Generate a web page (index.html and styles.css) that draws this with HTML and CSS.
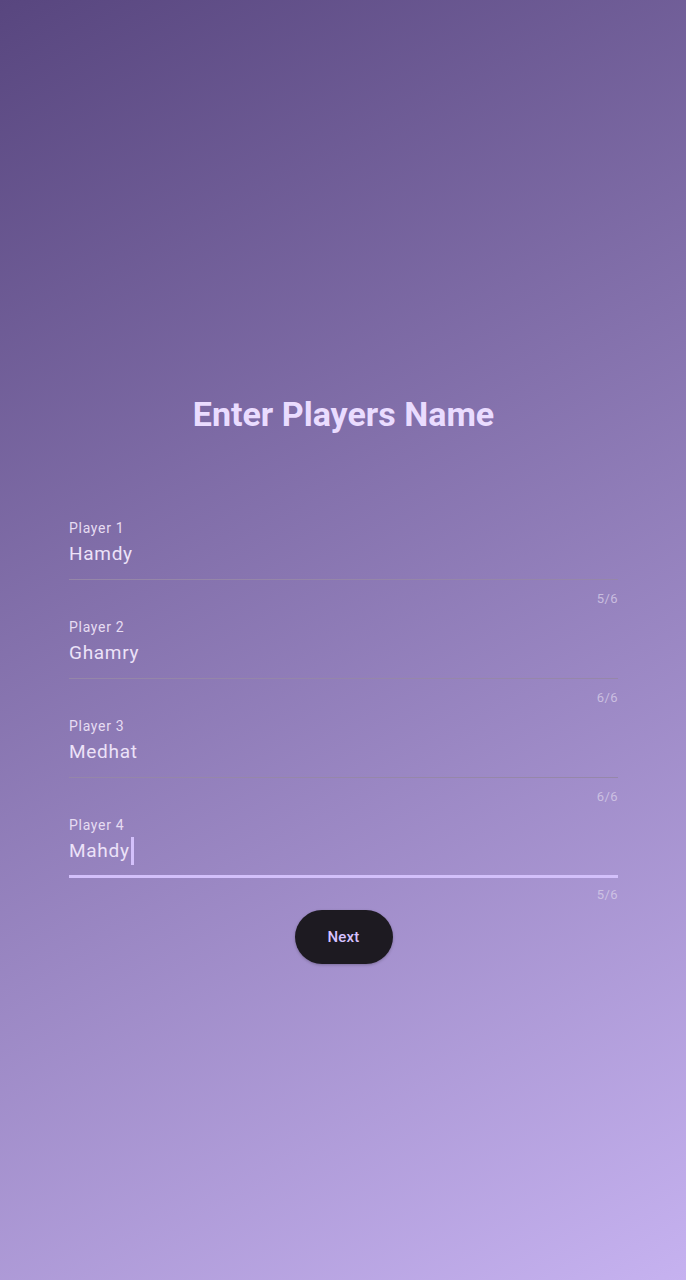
FILE: index.html
```html
<!DOCTYPE html>
<html>
<head>
<meta charset="utf-8">
<link rel="stylesheet" href="styles.css">
</head>
<body>
<div class="screen">
  <h1 class="title">Enter Players Name</h1>
  <div class="fields">
    <div class="field">
      <div class="label">Player 1</div>
      <div class="value">Hamdy</div>
      <div class="line"></div>
      <div class="counter">5/6</div>
    </div>
    <div class="field">
      <div class="label">Player 2</div>
      <div class="value">Ghamry</div>
      <div class="line"></div>
      <div class="counter">6/6</div>
    </div>
    <div class="field">
      <div class="label">Player 3</div>
      <div class="value">Medhat</div>
      <div class="line"></div>
      <div class="counter">6/6</div>
    </div>
    <div class="field focused">
      <div class="label">Player 4</div>
      <div class="value">Mahdy<span class="caret"></span></div>
      <div class="line"></div>
      <div class="counter">5/6</div>
    </div>
  </div>
  <div class="actions">
    <button class="next">Next</button>
  </div>
</div>
</body>
</html>
```
FILE: styles.css
```css
html, body {
  margin: 0;
  padding: 0;
}
body {
  width: 686px;
  height: 1280px;
  background: linear-gradient(152deg, #58467f 0%, #c6b2f0 100%);
  font-family: Roboto, "Noto Sans", sans-serif;
  overflow: hidden;
}
.screen {
  display: flex;
  flex-direction: column;
  padding: 394px 68px 0 69px;
}
.title {
  margin: 0;
  font-size: 34px;
  line-height: 40px;
  font-weight: 700;
  color: #eadcff;
  text-align: center;
}
.fields {
  margin-top: 84px;
  display: flex;
  flex-direction: column;
}
.field {
  display: flex;
  flex-direction: column;
  margin-bottom: 10px;
}
.label {
  font-size: 14px;
  line-height: 20px;
  color: #e6dcf2;
  letter-spacing: 0.7px;
}
.value {
  margin-top: 2px;
  font-size: 19px;
  line-height: 28px;
  color: #ece2f8;
  letter-spacing: 0.7px;
  display: flex;
  align-items: center;
  padding-bottom: 11px;
}
.line {
  height: 1px;
  background: rgba(150, 135, 168, 0.95);
}
.counter {
  margin-top: 11px;
  font-size: 13px;
  line-height: 16px;
  text-align: right;
  color: rgba(215, 205, 232, 0.8);
  letter-spacing: 0.4px;
}
.focused .line {
  height: 3px;
  margin-top: -1px;
  background: #d3c0fb;
}
.focused .counter {
  margin-top: 9px;
}
.caret {
  display: inline-block;
  width: 3px;
  height: 28px;
  margin-left: 1px;
  background: #d3c0fb;
}
.actions {
  display: flex;
  justify-content: center;
  margin-top: -3px;
}
.next {
  width: 98px;
  height: 54px;
  border: none;
  border-radius: 27px;
  background: #1d1a21;
  color: #d6c2ff;
  font-family: Roboto, sans-serif;
  font-size: 15px;
  font-weight: 500;
  letter-spacing: 0.2px;
  box-shadow: 0 1px 3px rgba(0,0,0,0.25);
}
```
